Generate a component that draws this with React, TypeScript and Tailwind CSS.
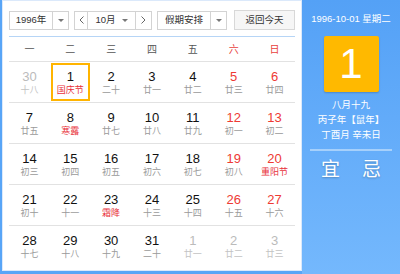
const FONT = { fontFamily: '"Liberation Sans", "Noto Sans CJK SC", sans-serif' };

type Day = { n: number; l: string; other?: boolean; red?: boolean; fest?: boolean; sel?: boolean };

const WEEK = ["一", "二", "三", "四", "五", "六", "日"];

const ROWS: Day[][] = [
  [
    { n: 30, l: "十八", other: true },
    { n: 1, l: "国庆节", fest: true, sel: true },
    { n: 2, l: "二十" },
    { n: 3, l: "廿一" },
    { n: 4, l: "廿二" },
    { n: 5, l: "廿三", red: true },
    { n: 6, l: "廿四", red: true },
  ],
  [
    { n: 7, l: "廿五" },
    { n: 8, l: "寒露", fest: true },
    { n: 9, l: "廿七" },
    { n: 10, l: "廿八" },
    { n: 11, l: "廿九" },
    { n: 12, l: "初一", red: true },
    { n: 13, l: "初二", red: true },
  ],
  [
    { n: 14, l: "初三" },
    { n: 15, l: "初四" },
    { n: 16, l: "初五" },
    { n: 17, l: "初六" },
    { n: 18, l: "初七" },
    { n: 19, l: "初八", red: true },
    { n: 20, l: "重阳节", red: true, fest: true },
  ],
  [
    { n: 21, l: "初十" },
    { n: 22, l: "十一" },
    { n: 23, l: "霜降", fest: true },
    { n: 24, l: "十三" },
    { n: 25, l: "十四" },
    { n: 26, l: "十五", red: true },
    { n: 27, l: "十六", red: true },
  ],
  [
    { n: 28, l: "十七" },
    { n: 29, l: "十八" },
    { n: 30, l: "十九" },
    { n: 31, l: "二十" },
    { n: 1, l: "廿一", other: true },
    { n: 2, l: "廿二", other: true },
    { n: 3, l: "廿三", other: true },
  ],
];

function Caret() {
  return <span className="block h-0 w-0 border-x-[3px] border-t-[3px] border-x-transparent border-t-[#777]" />;
}

function Chevron({ left }: { left?: boolean }) {
  return (
    <svg width="5" height="8" viewBox="0 0 5 8" fill="none" stroke="#666" strokeWidth="1">
      <path d={left ? "M4.5 0.5 L1 4 L4.5 7.5" : "M0.5 0.5 L4 4 L0.5 7.5"} />
    </svg>
  );
}

function Select({ label, w }: { label: string; w: string }) {
  return (
    <div className={`flex h-[19px] items-stretch border border-[#d3d3d3] bg-white ${w}`}>
      <span className="flex flex-1 items-center justify-center text-[9.5px] text-[#333]">{label}</span>
      <span className="flex w-[16px] items-center justify-center border-l border-[#d3d3d3]">
        <Caret />
      </span>
    </div>
  );
}

export default function App() {
  return (
    <div style={FONT} className="flex h-[274px] w-[400px] overflow-hidden bg-[#58a5f7]">
      {/* Left */}
      <div className="mb-[3px] ml-[2px] w-[300px] border border-[#dbe9fb] bg-white pl-[6px] pt-[9px]">
        <div className="flex items-center">
          <Select label="1996年" w="w-[60px]" />
          <div className="ml-[5px] flex h-[19px] w-[78px] items-stretch border border-[#d3d3d3] bg-white">
            <span className="flex w-[13px] items-center justify-center border-r border-[#d3d3d3]">
              <Chevron left />
            </span>
            <span className="flex flex-1 items-center justify-center gap-[6px] text-[9.5px] text-[#333]">
              10月
              <Caret />
            </span>
            <span className="flex w-[16px] items-center justify-center border-l border-[#d3d3d3]">
              <Chevron />
            </span>
          </div>
          <Select label="假期安排" w="ml-[5px] w-[70px]" />
          <div className="ml-[7px] flex h-[20px] w-[61px] items-center justify-center border border-[#d8d8d8] bg-[#f6f6f6] text-[9.5px] text-[#333]">
            返回今天
          </div>
        </div>

        <div className="w-[286px]">
          <div className="mt-[6px] h-px bg-[#b6d5f6]" />
          <div className="grid h-[24px] grid-cols-7 items-center text-center text-[10px] text-[#555]">
            {WEEK.map((w, i) => (
              <span key={w} className={i >= 5 ? "text-[#e8413d]" : ""}>
                {w}
              </span>
            ))}
          </div>
          {ROWS.map((row, ri) => (
            <div key={ri} className="grid h-[41px] grid-cols-7 border-t border-[#e2e2e2]">
              {row.map((d, ci) => {
                const numColor = d.other ? "text-[#bbb]" : d.red ? "text-[#ee3a34]" : "text-[#111]";
                const lunarColor = d.fest ? "text-[#e8313a]" : d.other ? "text-[#c3c3c3]" : "text-[#9a9a9a]";
                return (
                  <div key={ci} className="flex items-center justify-center">
                    <div
                      className={`flex h-[38px] w-[39px] flex-col items-center justify-center gap-[1px] border-2 ${
                        d.sel ? "border-[#ffb400]" : "border-transparent"
                      }`}
                    >
                      <span className={`text-[13px] leading-[15px] ${numColor}`}>{d.n}</span>
                      <span className={`text-[9px] leading-[11px] ${lunarColor}`}>{d.l}</span>
                    </div>
                  </div>
                );
              })}
            </div>
          ))}
        </div>
      </div>

      {/* Right */}
      <div className="flex flex-1 flex-col items-center bg-gradient-to-b from-[#54a1f6] to-[#74b8fd] pt-[13px] text-white">
        <div className="text-[9.5px] leading-[12px]">1996-10-01 星期二</div>
        <div className="mt-[11px] flex h-[56px] w-[55px] items-center justify-center rounded-[2px] bg-[#ffb900] text-[42px] leading-none shadow-[0_1px_2px_rgba(0,0,0,0.2)]">
          1
        </div>
        <div className="mt-[5px] text-[9.5px] leading-[15px]">八月十九</div>
        <div className="text-[9.5px] leading-[15px]">丙子年【鼠年】</div>
        <div className="text-[9.5px] leading-[15px]">丁酉月 辛未日</div>
        <div className="mt-[7px] h-[2px] w-[82px] bg-[#a6d0fb]" />
        <div className="mt-[8px] flex gap-[22px] text-[19px] leading-[22px] [text-shadow:0_1px_2px_rgba(0,0,0,0.25)]">
          <span>宜</span>
          <span>忌</span>
        </div>
      </div>
    </div>
  );
}
